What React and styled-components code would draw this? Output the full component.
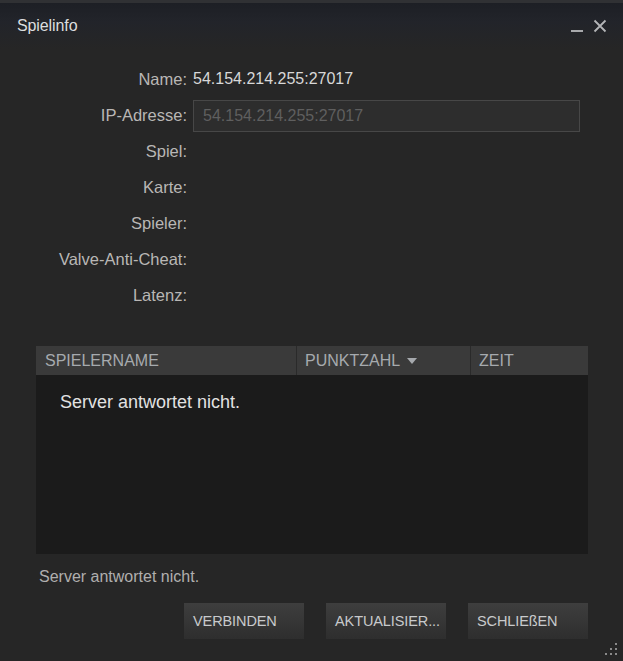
import * as React from "react";
import styled, { createGlobalStyle } from "styled-components";

const GlobalStyle = createGlobalStyle`
  html, body {
    margin: 0;
    padding: 0;
    background: #262626;
  }
  body {
    font-family: "Liberation Sans", Arial, sans-serif;
  }
`;

const Window = styled.div`
  position: relative;
  box-sizing: border-box;
  width: 623px;
  height: 661px;
  display: flex;
  flex-direction: column;
  background: #262626;
  border-top: 3px solid #303134;
  overflow: hidden;
`;

const TitleBar = styled.div`
  display: flex;
  align-items: center;
  justify-content: space-between;
  height: 46px;
  padding: 0 16px 0 17px;
  background: linear-gradient(180deg, #1d1f25 0%, #22242a 40%, #262626 100%);
`;

const Title = styled.span`
  font-size: 16px;
  color: #dcdedf;
  letter-spacing: -0.1px;
`;

const WindowControls = styled.div`
  display: flex;
  align-items: flex-end;
  gap: 10px;
`;

const Minimize = styled.span`
  display: block;
  width: 12px;
  height: 2px;
  background: #a8a9ab;
  margin-bottom: 1px;
`;

const Form = styled.div`
  display: grid;
  grid-template-columns: 187px 387px;
  grid-auto-rows: 36px;
  column-gap: 6px;
  margin-top: 12px;
`;

const Label = styled.div`
  display: flex;
  align-items: center;
  justify-content: flex-end;
  font-size: 16.5px;
  color: #b9b7b5;
`;

const Value = styled.div`
  display: flex;
  align-items: center;
  font-size: 16px;
  color: #d8d8d8;
`;

const Input = styled.input`
  box-sizing: border-box;
  width: 387px;
  height: 32px;
  margin-top: 3px;
  padding: 0 9px;
  border: 1px solid #474747;
  background: #2d2d2d;
  color: #5f5f5f;
  font-family: "Liberation Sans", Arial, sans-serif;
  font-size: 16px;
  outline: none;
`;

const Table = styled.div`
  margin: 33px 35px 0 36px;
  display: flex;
  flex-direction: column;
`;

const TableHead = styled.div`
  display: grid;
  grid-template-columns: 260px 174px 1fr;
  height: 29px;
  background: #3a3a3a;
`;

const HeadCell = styled.div`
  display: flex;
  align-items: center;
  gap: 7px;
  padding-left: ${(p) => (p.$first ? "9px" : "8px")};
  border-left: ${(p) => (p.$first ? "none" : "1px solid #2a2a2a")};
  font-size: 16px;
  color: #a6aaae;
  text-transform: uppercase;
`;

const SortArrow = styled.span`
  width: 0;
  height: 0;
  border-left: 5px solid transparent;
  border-right: 5px solid transparent;
  border-top: 6px solid #a6a9ad;
`;

const TableBody = styled.div`
  height: 179px;
  background: #1b1b1b;
  padding: 17px 0 0 24px;
  box-sizing: border-box;
  font-size: 18px;
  color: #e2e2e2;
`;

const Status = styled.div`
  margin: 14px 0 0 39px;
  font-size: 16px;
  color: #b0afae;
`;

const ButtonRow = styled.div`
  display: flex;
  justify-content: flex-end;
  gap: 22px;
  margin: 17px 35px 0 0;
`;

const Button = styled.button`
  box-sizing: border-box;
  width: 120px;
  height: 36px;
  padding: 0 0 0 9px;
  text-align: left;
  border: none;
  background: linear-gradient(180deg, #3e3e3e 0%, #363636 50%, #2e2e2e 100%);
  color: #c8cacc;
  font-family: "Liberation Sans", Arial, sans-serif;
  font-size: 14.5px;
  letter-spacing: -0.1px;
  white-space: nowrap;
`;

const Grip = styled.svg`
  position: absolute;
  right: 4px;
  bottom: 4px;
`;

const rows = [
  ["Name:", "54.154.214.255:27017"],
  ["IP-Adresse:", null],
  ["Spiel:", ""],
  ["Karte:", ""],
  ["Spieler:", ""],
  ["Valve-Anti-Cheat:", ""],
  ["Latenz:", ""],
];

export default function App() {
  return (
    <>
      <GlobalStyle />
      <Window>
        <TitleBar>
          <Title>Spielinfo</Title>
          <WindowControls>
            <Minimize />
            <svg width="14" height="14" viewBox="0 0 14 14">
              <path d="M1.5 1.5 L12.5 12.5 M12.5 1.5 L1.5 12.5" stroke="#b4b5b7" strokeWidth="1.8" />
            </svg>
          </WindowControls>
        </TitleBar>

        <Form>
          {rows.map(([label, value]) => (
            <React.Fragment key={label}>
              <Label>{label}</Label>
              {value === null ? (
                <div>
                  <Input readOnly value="54.154.214.255:27017" />
                </div>
              ) : (
                <Value>{value}</Value>
              )}
            </React.Fragment>
          ))}
        </Form>

        <Table>
          <TableHead>
            <HeadCell $first>Spielername</HeadCell>
            <HeadCell>
              Punktzahl <SortArrow />
            </HeadCell>
            <HeadCell>Zeit</HeadCell>
          </TableHead>
          <TableBody>Server antwortet nicht.</TableBody>
        </Table>

        <Status>Server antwortet nicht.</Status>

        <ButtonRow>
          <Button>VERBINDEN</Button>
          <Button>AKTUALISIER...</Button>
          <Button>SCHLIEßEN</Button>
        </ButtonRow>

        <Grip width="16" height="16" viewBox="0 0 16 16">
          {[
            [12, 2],
            [7, 7],
            [12, 7],
            [2, 12],
            [7, 12],
            [12, 12],
          ].map(([x, y]) => (
            <rect key={`${x}-${y}`} x={x} y={y} width="2" height="2" fill="#8a8a8a" />
          ))}
        </Grip>
      </Window>
    </>
  );
}
